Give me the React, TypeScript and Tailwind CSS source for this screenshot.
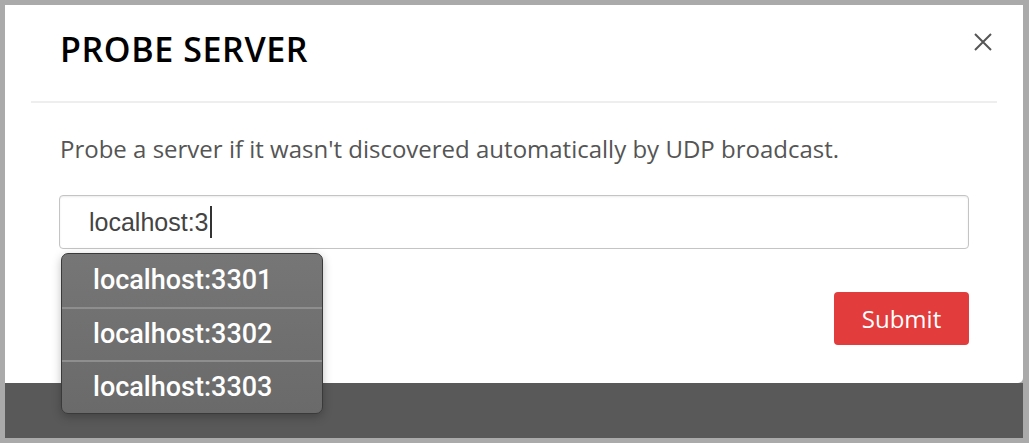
const suggestions = ["localhost:3301", "localhost:3302", "localhost:3303"];

export default function App() {
  return (
    <div className="w-[1029px] h-[443px] bg-[#aaaaaa] pt-[5px] pl-[5px] pr-[6px] pb-[5px] overflow-hidden">
      <div className="relative flex flex-col h-full">
        <div className="h-[378px] bg-white rounded-br-[5px] flex flex-col">
          <div className="mx-[26px] border-b-2 border-[#eeeeee] h-[98px] flex items-start justify-between">
            <h1
              className="pl-[29px] pt-[24px] text-[34px] leading-[40px] font-semibold tracking-[0.6px] text-black"
              style={{ fontFamily: '"Open Sans", sans-serif' }}
            >
              PROBE SERVER
            </h1>
            <button className="mt-[28px] mr-[5px] text-[#555555]">
              <svg width="18" height="18" viewBox="0 0 18 18" fill="none" stroke="currentColor" strokeWidth="2">
                <path d="M1 1L17 17M17 1L1 17" />
              </svg>
            </button>
          </div>
          <div className="px-[54px] pt-[32px] flex flex-col" style={{ fontFamily: '"Open Sans", sans-serif' }}>
            <p className="pl-px text-[24px] leading-[28px] text-[#555555]">
              Probe a server if it wasn't discovered automatically by UDP broadcast.
            </p>
            <div className="mt-[32px] h-[54px] border border-[#c4c4c4] rounded-[4px] shadow-[inset_0_1px_2px_rgba(0,0,0,0.08)] flex items-center pl-[29px]">
              <span
                className="text-[25px] text-[#444444] leading-none"
                style={{ fontFamily: '"Liberation Sans", Arial, sans-serif' }}
              >
                localhost:3
              </span>
              <span className="ml-px w-[2px] h-[32px] bg-[#333333]" />
            </div>
            <div className="mt-[43px] flex justify-end">
              <button className="w-[135px] h-[53px] rounded-[4px] bg-[#e23c3c] text-white text-[24px]">
                Submit
              </button>
            </div>
          </div>
        </div>
        <div className="flex-1 bg-[#595959]" />

        <div
          className="absolute left-[56px] top-[248px] w-[262px] rounded-[7px] border border-[#3a3a3a] bg-gradient-to-b from-[#767676] to-[#6a6a6a] shadow-[0_3px_10px_rgba(0,0,0,0.25)] overflow-hidden"
          style={{ fontFamily: 'Roboto, "Liberation Sans", Arial, sans-serif' }}
        >
          {suggestions.map((s, i) => (
            <div
              key={s}
              className={
                i === 0
                  ? "h-[53px] flex items-center pl-[31px] text-white text-[27px] font-medium"
                  : "h-[53px] flex items-center pl-[31px] text-white text-[27px] font-medium border-t-2 border-[#8e8e8e]"
              }
            >
              {s}
            </div>
          ))}
        </div>
      </div>
    </div>
  );
}
